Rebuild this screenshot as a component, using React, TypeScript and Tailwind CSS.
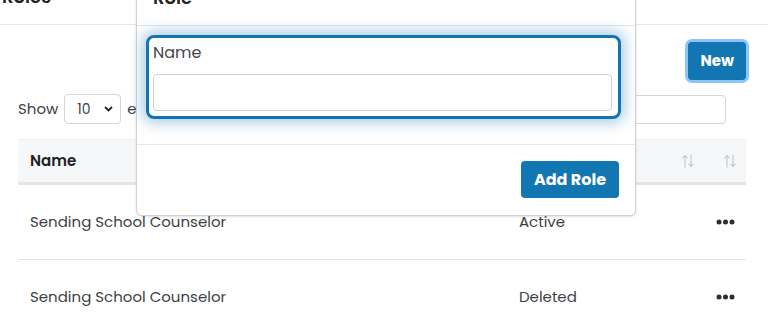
import React from "react";

const font = { fontFamily: "Poppins, 'Open Sans', 'Liberation Sans', sans-serif" };

const SortIcon = () => (
  <svg width="12" height="14" viewBox="0 0 12 14" fill="none" stroke="#c3c6cb" strokeWidth="1.1" strokeLinecap="round">
    <path d="M3 13V1.5M0.8 3.8L3 1.5l2.2 2.3" />
    <path d="M9 1v11.5M6.8 10.2L9 12.5l2.2-2.3" />
  </svg>
);

const Dots = () => (
  <svg width="19" height="6" viewBox="0 0 19 6" fill="#2a2d33">
    <circle cx="3" cy="3" r="2.5" />
    <circle cx="9.5" cy="3" r="2.5" />
    <circle cx="16" cy="3" r="2.5" />
  </svg>
);

const rows = [
  { name: "Sending School Counselor", status: "Active" },
  { name: "Sending School Counselor", status: "Deleted" },
];

export default function App() {
  return (
    <div className="relative w-[768px] h-[318px] overflow-hidden bg-white text-[#3d3f44]" style={font}>
      {/* page behind the dialog */}
      <div className="-mt-[31px]">
        <div className="h-[56px] flex items-center px-[2px] border-b border-[#e4e6e9]">
          <h1 className="text-[18px] font-semibold text-[#222]">Roles</h1>
        </div>

        <div className="px-[18px] pr-[22px]">
          <div className="flex justify-end pt-[17px]">
            <button className="h-[38px] px-[12px] rounded-[4px] bg-[#1276b2] text-white text-[15px] font-bold ring-[3px] ring-[#8cc4fb]">
              New
            </button>
          </div>

          <div className="mt-[14px] flex items-center justify-between h-[30px]">
            <div className="flex items-center gap-[6px] text-[15px]">
              <span>Show</span>
              <div className="w-[57px] h-[30px] rounded-[4px] border border-[#d3d5d9] flex items-center justify-between pl-[12px] pr-[7px] text-[14px]">
                <span>10</span>
                <svg width="9" height="6" viewBox="0 0 9 6" fill="none" stroke="#222" strokeWidth="1.8">
                  <path d="M1 1l3.5 3.5L8 1" />
                </svg>
              </div>
              <span>entries</span>
            </div>
            <div className="flex items-center gap-2 text-[15px] pr-[20px]">
              <span>Search:</span>
              <div className="w-[200px] h-[29px] rounded-[4px] border border-[#d3d5d9]" />
            </div>
          </div>

          <div className="mt-[15px]">
            <div className="grid grid-cols-[489px_198px_1fr] h-[46px] bg-[#f6f7f9] border-t border-[#eceef0] border-b-[3px] border-b-[#e2e4e7] text-[15px] font-semibold text-[#1d1f23]">
              <div className="flex items-center justify-between pl-[12px] pr-[11px]">
                <span>Name</span>
                <SortIcon />
              </div>
              <div className="flex items-center justify-between pl-[12px] pr-[11px]">
                <span className="invisible">Status</span>
                <SortIcon />
              </div>
              <div className="flex items-center justify-end pr-[10px]">
                <SortIcon />
              </div>
            </div>
            {rows.map((r, i) => (
              <div key={i} className="grid grid-cols-[489px_198px_1fr] h-[75px] border-b border-[#e2e4e7] text-[15px]">
                <div className="flex items-center pl-[12px]">{r.name}</div>
                <div className="flex items-center pl-[12px]">{r.status}</div>
                <div className="flex items-center justify-center">
                  <Dots />
                </div>
              </div>
            ))}
          </div>
        </div>
      </div>

      {/* dialog */}
      <div className="absolute left-[136px] top-[-31px] w-[500px] bg-white border border-[#cfd2d6] rounded-b-[6px] shadow-sm">
        <div className="h-[56px] flex items-center px-[16px] border-b border-[#e4e6e9]">
          <h2 className="text-[18px] font-semibold text-[#222]">Role</h2>
        </div>
        <div className="px-[9px] pt-[9px] pb-[25px] border-b border-[#e4e6e9]">
          <div className="w-[475px] rounded-[8px] border-[3px] border-[#1274b0] shadow-[0_0_14px_4px_rgba(18,116,176,0.35)] px-[4px] pt-[3px] pb-[5px]">
            <label className="block text-[16px] text-[#44474c] leading-[24px]">Name</label>
            <div className="mt-[9px] h-[37px] w-[459px] rounded-[4px] border border-[#cfd2d6]" />
          </div>
        </div>
        <div className="flex justify-end px-[16px] pt-[16px] pb-[17px]">
          <button className="h-[37px] px-[13px] rounded-[4px] bg-[#1276b2] text-white text-[16px] font-bold">
            Add Role
          </button>
        </div>
      </div>
    </div>
  );
}
